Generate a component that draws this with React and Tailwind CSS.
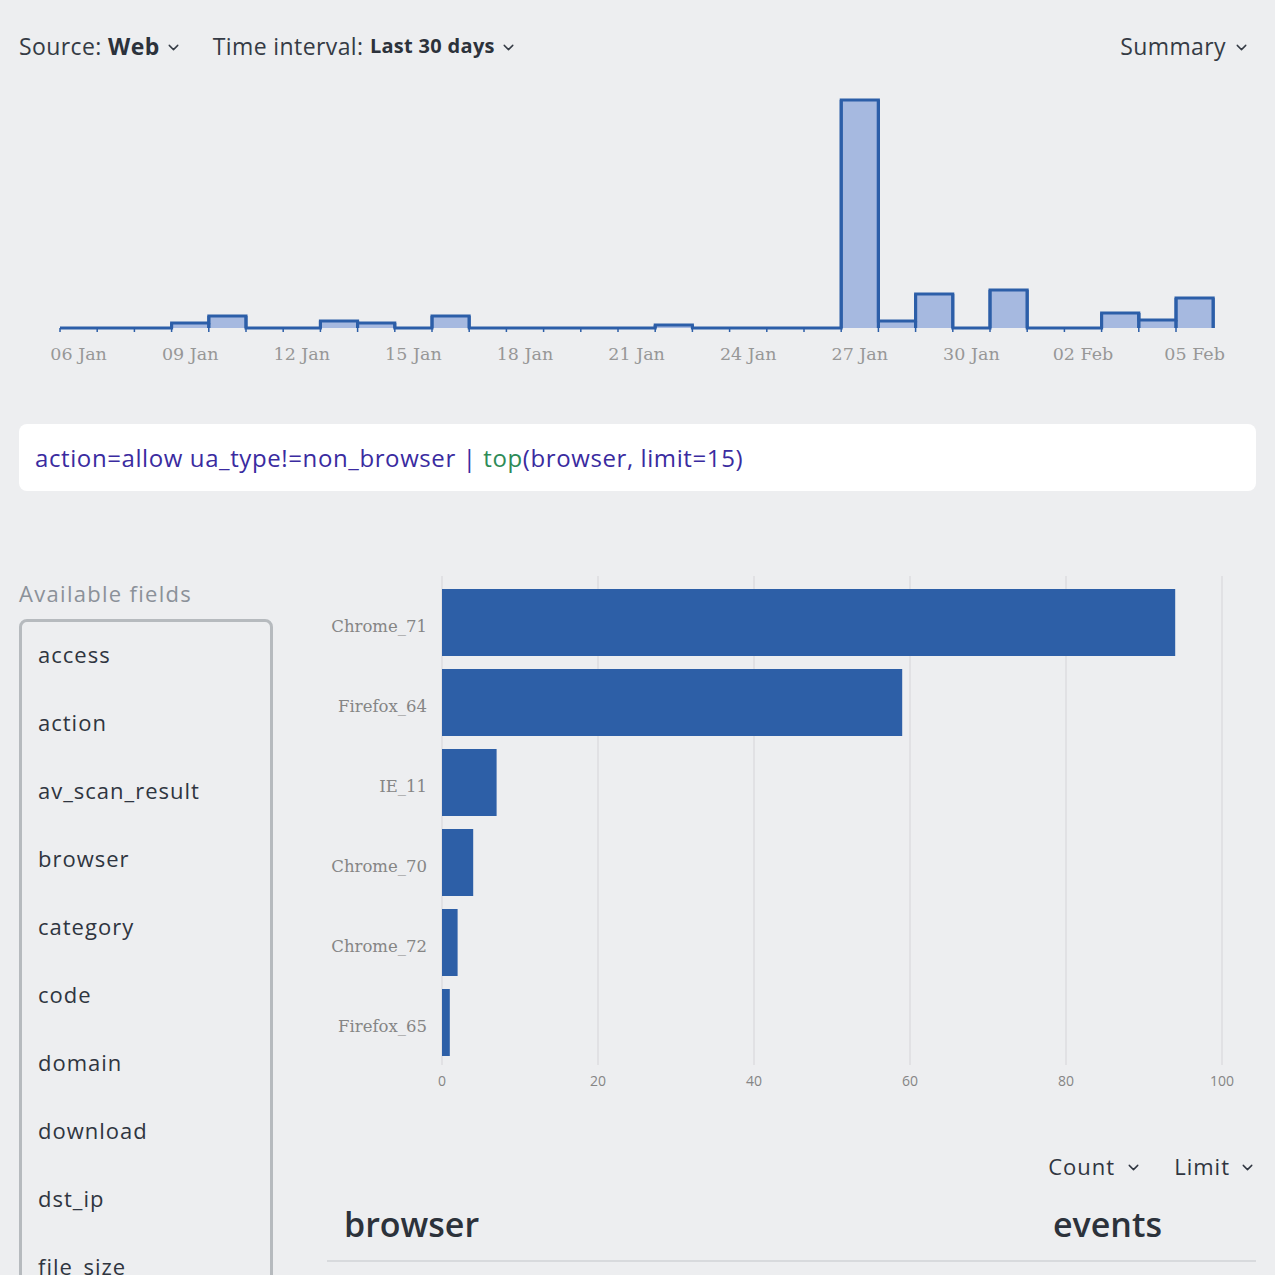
import React from 'react';
import { ChevronDown } from 'lucide-react';

const days = [
  0, 0, 0, 5, 12, 0, 0, 7, 5, 0, 12, 0, 0, 0, 0, 0, 3, 0, 0, 0, 0, 228, 7, 34, 0, 38, 0, 0, 15, 8, 30,
];
const dayLabels = ['06 Jan', '09 Jan', '12 Jan', '15 Jan', '18 Jan', '21 Jan', '24 Jan', '27 Jan', '30 Jan', '02 Feb', '05 Feb'];

const browsers = [
  { name: 'Chrome_71', count: 94 },
  { name: 'Firefox_64', count: 59 },
  { name: 'IE_11', count: 7 },
  { name: 'Chrome_70', count: 4 },
  { name: 'Chrome_72', count: 2 },
  { name: 'Firefox_65', count: 1 },
];

const fields = ['access', 'action', 'av_scan_result', 'browser', 'category', 'code', 'domain', 'download', 'dst_ip', 'file_size'];

const Histogram = () => {
  const x0 = 60;
  const w = 37.2;
  const base = 236;
  // step outline path
  let d = `M${x0} ${base}`;
  days.forEach((v, i) => {
    const xa = x0 + i * w;
    const xb = xa + w;
    d += ` L${xa} ${base - v} L${xb} ${base - v}`;
  });
  d += ` L${x0 + days.length * w} ${base}`;
  return (
    <svg width="1275" height="288" className="block">
      {days.map((v, i) =>
        v > 0 ? (
          <rect key={i} x={x0 + i * w} y={base - v} width={w} height={v} fill="#a6b9e0" />
        ) : null
      )}
      {days.map((v, i) =>
        v > 0 && i > 0 ? (
          <line key={'s' + i} x1={x0 + i * w} x2={x0 + i * w} y1={base} y2={base - Math.max(v, days[i - 1])} stroke="#2c5ea8" strokeWidth="3" />
        ) : null
      )}
      {days.map((v, i) =>
        v > 0 ? (
          <line key={'e' + i} x1={x0 + (i + 1) * w} x2={x0 + (i + 1) * w} y1={base} y2={base - v} stroke="#2c5ea8" strokeWidth="3" />
        ) : null
      )}
      <path d={d} fill="none" stroke="#2c5ea8" strokeWidth="3" strokeLinejoin="miter" />
      {days.map((_, i) => (
        <line key={'t' + i} x1={x0 + i * w} x2={x0 + i * w} y1={base} y2={base + 4} stroke="#2c5ea8" strokeWidth="1.5" />
      ))}
      {dayLabels.map((l, i) => (
        <text
          key={l}
          x={x0 + i * 3 * w + w / 2}
          y={268}
          textAnchor="middle"
          fill="#979797"
          fontSize="17.5"
          fontFamily="'DejaVu Serif', serif"
        >
          {l}
        </text>
      ))}
    </svg>
  );
};

const TopChart = () => {
  const ax = 115;
  const k = 7.8;
  return (
    <svg width="929" height="540" className="block">
      {[0, 20, 40, 60, 80, 100].map(t => (
        <g key={t}>
          <line x1={ax + t * k} x2={ax + t * k} y1={16} y2={505} stroke="#dcdde0" strokeWidth="1.5" />
          <text
            x={ax + t * k}
            y={526}
            textAnchor="middle"
            fill="#858585"
            fontSize="14"
            fontFamily="'Open Sans', sans-serif"
          >
            {t}
          </text>
        </g>
      ))}
      {browsers.map((b, i) => (
        <g key={b.name}>
          <rect x={ax} y={29 + i * 80} width={b.count * k} height={67} fill="#2d5fa7" />
          <text
            x={100}
            y={29 + i * 80 + 43}
            textAnchor="end"
            fill="#858585"
            fontSize="16.5"
            fontFamily="'DejaVu Serif', serif"
          >
            {b.name}
          </text>
        </g>
      ))}
    </svg>
  );
};

const App = () => {
  return (
    <div className="w-[1275px] h-[1275px] overflow-hidden bg-[#edeef0] font-['Open_Sans',sans-serif] text-[#353b45]">
      <div className="h-[92px] px-[19px] flex items-center justify-between text-[23px] tracking-[0.4px]">
        <div className="flex items-center">
          <span>Source:&nbsp;</span>
          <span className="font-bold text-[#2c323b]">Web</span>
          <ChevronDown size={17} strokeWidth={2} className="ml-[5px] mt-[2px]" />
          <span className="ml-[31px]">Time interval:&nbsp;</span>
          <span className="font-bold text-[20px] tracking-[0.3px] text-[#2c323b]">Last 30 days</span>
          <ChevronDown size={17} strokeWidth={2} className="ml-[5px] mt-[2px]" />
        </div>
        <div className="flex items-center mr-[6px]">
          <span>Summary</span>
          <ChevronDown size={17} strokeWidth={2} className="ml-[7px] mt-[2px]" />
        </div>
      </div>

      <Histogram />

      <div className="mx-[19px] mt-[44px] h-[67px] bg-white rounded-[8px] flex items-center px-[16px] text-[24px] tracking-[0.6px] text-[#3a2ba0]">
        <span>action=allow ua_type!=non_browser | </span>
        <span className="text-[#2e8b57]">&nbsp;top</span>
        <span>(browser, limit=15)</span>
      </div>

      <div className="mt-[69px] px-[19px] flex gap-[54px]">
        <div className="w-[254px] shrink-0">
          <div className="pt-[18px] text-[22px] leading-[30px] tracking-[1.3px] text-[#8b9199]">Available fields</div>
          <div className="mt-[11px] border-[3px] border-[#b6babe] rounded-[8px] h-[700px] pl-[16px] pt-[17px] flex flex-col gap-[38px]">
            {fields.map(f => (
              <div key={f} className="text-[22px] leading-[30px] text-[#2f3540] tracking-[1px]">{f}</div>
            ))}
          </div>
        </div>

        <div className="flex-1">
          <TopChart />
          <div className="mt-[51px] h-[30px] flex justify-end items-center gap-[32px] text-[22px] tracking-[1px] text-[#2f3540]">
            <div className="flex items-center">
              Count
              <ChevronDown size={17} strokeWidth={2} className="ml-[10px] mt-[2px]" />
            </div>
            <div className="flex items-center">
              Limit
              <ChevronDown size={17} strokeWidth={2} className="ml-[9px] mt-[2px]" />
            </div>
          </div>
          <div className="mt-[20px] pb-[13px] border-b-2 border-[#d8dadd] grid grid-cols-[726px_1fr] text-[34px] leading-[46px] font-semibold text-[#2c323b]">
            <div className="pl-[17px]">browser</div>
            <div>events</div>
          </div>
        </div>
      </div>
    </div>
  );
};

export default App;
